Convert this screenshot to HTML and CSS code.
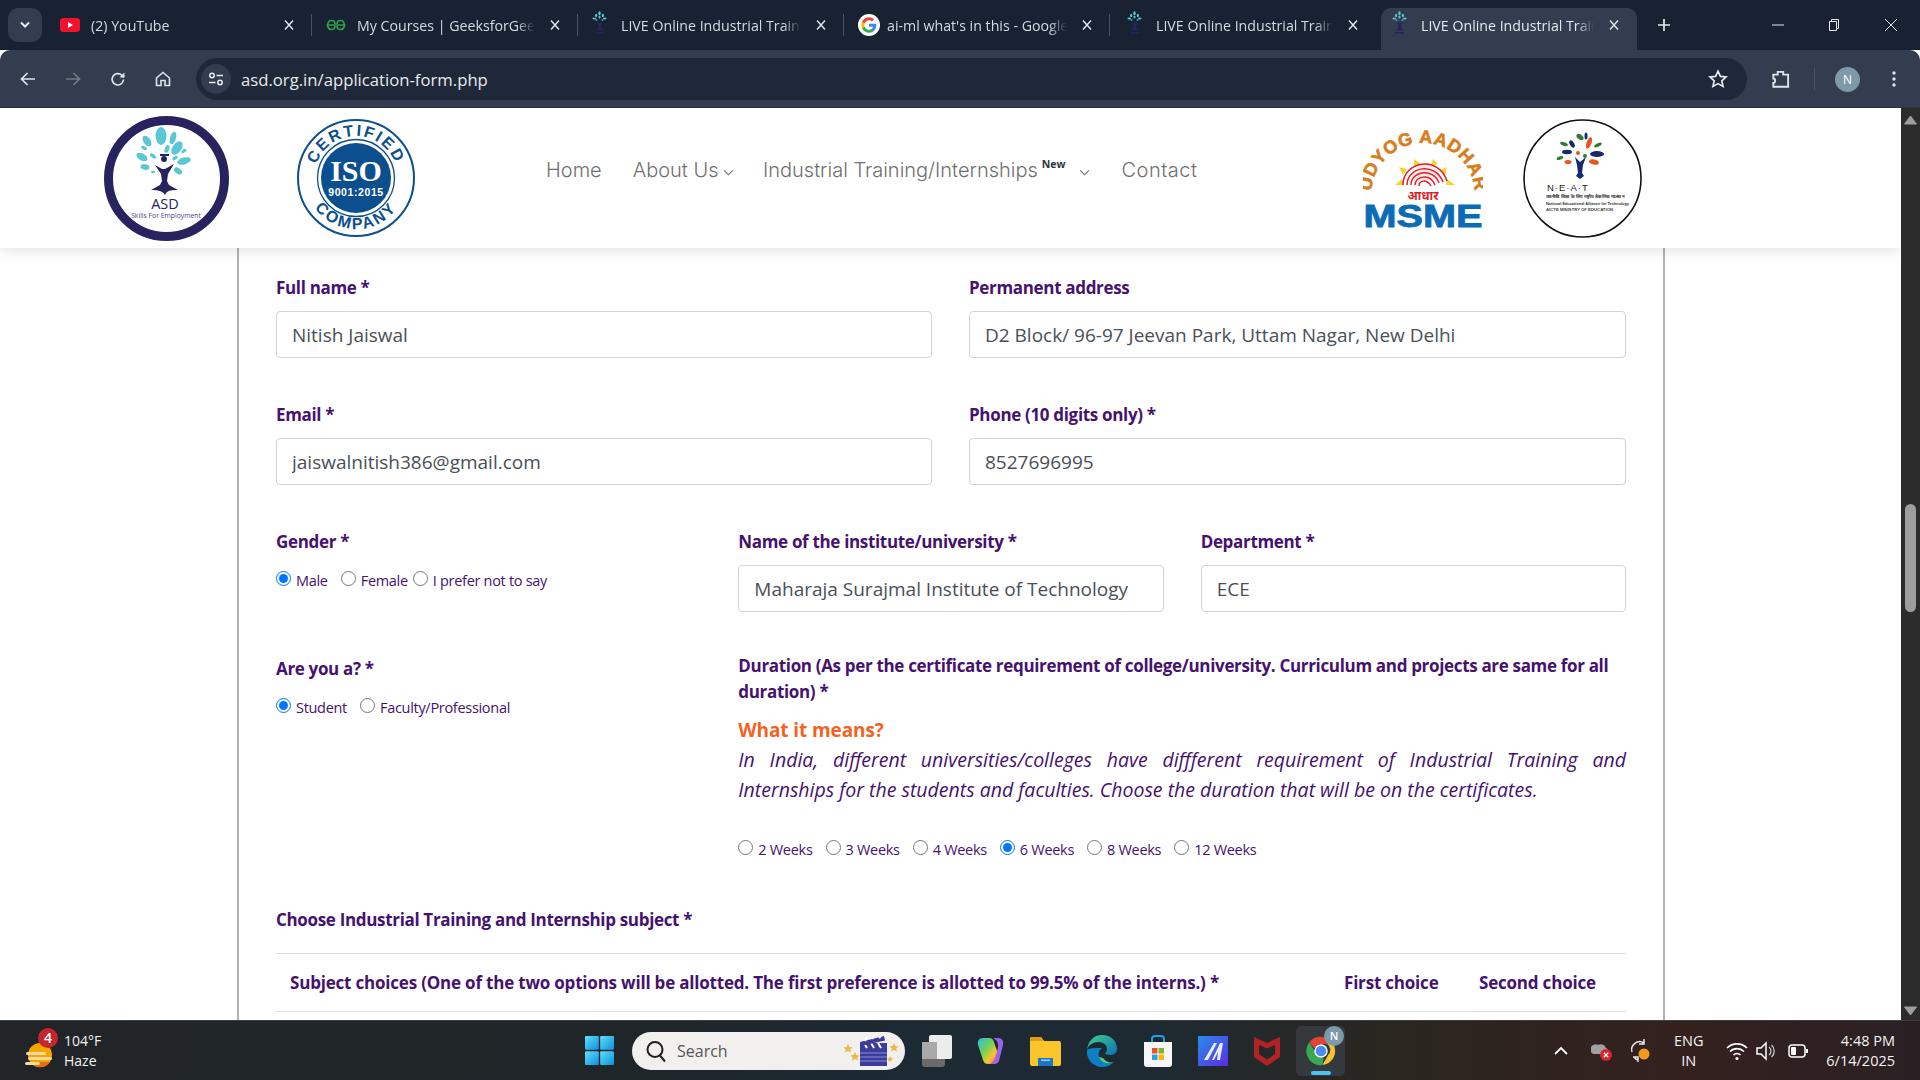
FILE: index.html
```html
<!DOCTYPE html>
<html lang="en">
<head>
<meta charset="utf-8">
<title>LIVE Online Industrial Training</title>
<link rel="stylesheet" href="styles.css">
</head>
<body>
<svg class="sprite" aria-hidden="true">
  <symbol id="fav" viewBox="0 0 20 32">
    <g fill="#58c8d2"><ellipse cx="10" cy="3" rx="1.6" ry="2.6"/><ellipse cx="5.5" cy="6" rx="1.5" ry="2.4"/><ellipse cx="14.5" cy="6" rx="1.5" ry="2.4"/><ellipse cx="3" cy="10" rx="2.4" ry="1.3"/><ellipse cx="17" cy="10" rx="2.4" ry="1.3"/><ellipse cx="10" cy="8" rx="1.4" ry="2"/><ellipse cx="6" cy="12" rx="1.4" ry="1"/><ellipse cx="14" cy="12" rx="1.4" ry="1"/></g>
    <path fill="#28235f" d="M6 14l3 2 2 0 3-2-2 6 1 4 3 2H5l3-2 1-4z"/>
    <rect x="4" y="28" width="12" height="2" fill="#28235f"/>
  </symbol>
  <symbol id="x" viewBox="0 0 12 12"><path d="M2 1.5l8 9M10 1.5l-8 9" stroke="#dfe3ea" stroke-width="1.5" fill="none"/></symbol>
</svg>

<div class="window">
  <header class="tabstrip">
    <button class="tabs-menu" type="button"><svg width="12" height="8" viewBox="0 0 12 8"><path d="M2 1.5l4 4 4-4" stroke="#e8eaed" stroke-width="2" fill="none"/></svg></button>
    <div class="tab">
      <svg class="tab-icon" viewBox="0 0 20 14"><rect width="20" height="14" rx="3.5" fill="#f4112d"/><path d="M8 4l5 3-5 3z" fill="#fff"/></svg>
      <span class="tab-title">(2) YouTube</span>
      <svg class="tab-x"><use href="#x"/></svg>
    </div>
    <div class="tab">
      <svg class="tab-icon" viewBox="0 0 20 12"><g fill="none" stroke="#2f9e49" stroke-width="1.7"><path d="M10 6H1.5C2 3 3.5 1.5 5.5 1.5S9 3 9 5"/><path d="M10 6h8.500C18 3 16.500 1.500 14.500 1.500S11 3 11 5"/><path d="M1.500 6C2 9 3.500 10.500 5.500 10.500S9 9 9 7M18.500 6C18 9 16.500 10.500 14.500 10.500S11 9 11 7"/></g></svg>
      <span class="tab-title">My Courses | GeeksforGeeks</span>
      <svg class="tab-x"><use href="#x"/></svg>
    </div>
    <div class="tab">
      <svg class="tab-fav"><use href="#fav"/></svg>
      <span class="tab-title">LIVE Online Industrial Training</span>
      <svg class="tab-x"><use href="#x"/></svg>
    </div>
    <div class="tab">
      <svg class="tab-icon tab-google" viewBox="0 0 24 24"><circle cx="12" cy="12" r="12" fill="#fff"/><path fill="#4285f4" d="M20 12.300c0-.6-.05-1.100-.15-1.600H12v3.100h4.500c-.2 1-.8 1.900-1.700 2.500v2h2.700c1.600-1.500 2.500-3.600 2.500-6z"/><path fill="#34a853" d="M12 20.500c2.300 0 4.200-.8 5.500-2.100l-2.700-2c-.7.5-1.700.8-2.800.8-2.200 0-4-1.500-4.700-3.400H4.500v2.100c1.400 2.800 4.300 4.600 7.500 4.600z"/><path fill="#fbbc05" d="M7.300 13.800c-.4-1-.4-2.300 0-3.500V8.200H4.500c-1 1.900-1 5.100 0 7.700z"/><path fill="#ea4335" d="M12 6.800c1.200 0 2.400.4 3.200 1.300l2.400-2.400C16.100 4.300 14.200 3.500 12 3.500c-3.200 0-6.100 1.800-7.500 4.700l2.800 2.100C8 8.300 9.800 6.800 12 6.800z"/></svg>
      <span class="tab-title">ai-ml what's in this - Google Search</span>
      <svg class="tab-x"><use href="#x"/></svg>
    </div>
    <div class="tab tab-last">
      <svg class="tab-fav"><use href="#fav"/></svg>
      <span class="tab-title">LIVE Online Industrial Training</span>
      <svg class="tab-x"><use href="#x"/></svg>
    </div>
    <div class="tab tab-active">
      <svg class="tab-fav"><use href="#fav"/></svg>
      <span class="tab-title">LIVE Online Industrial Training</span>
      <svg class="tab-x"><use href="#x"/></svg>
    </div>
    <svg class="new-tab" viewBox="0 0 14 14"><path d="M7 1v12M1 7h12" stroke="#e8eaed" stroke-width="1.700"/></svg>
    <div class="win-controls">
      <svg width="12" height="12" viewBox="0 0 12 12"><path d="M0 6h12" stroke="#e8eaed"/></svg>
      <svg width="12" height="14" viewBox="0 0 12 14"><path d="M1.500 3.500h7v9h-7zM3.500 3.500v-2h7v9h-2" stroke="#e8eaed" fill="none"/></svg>
      <svg width="14" height="14" viewBox="0 0 14 14"><path d="M1 1l12 12M13 1L1 13" stroke="#e8eaed" fill="none"/></svg>
    </div>
  </header>

  <div class="toolbar">
    <svg class="tb-icon" viewBox="0 0 18 18"><path d="M16 9H3M8.500 3L2.500 9l6 6" stroke="#dfe3ea" stroke-width="1.700" fill="none"/></svg>
    <svg class="tb-icon" viewBox="0 0 18 18"><path d="M2 9h13M9.500 3l6 6-6 6" stroke="#737a87" stroke-width="1.700" fill="none"/></svg>
    <svg class="tb-icon" viewBox="0 0 18 18"><path d="M14.500 9.500a5.700 5.700 0 1 1-1.700-4.300L15 7.300" stroke="#dfe3ea" stroke-width="1.700" fill="none"/><path d="M15.500 2.500v5h-5z" fill="#dfe3ea"/></svg>
    <svg class="tb-icon" viewBox="0 0 18 18"><path d="M2.500 8L9 2.500 15.500 8v7.500h-4.500v-5H7v5H2.500z" stroke="#dfe3ea" stroke-width="1.600" fill="none"/></svg>
    <div class="omnibox">
      <span class="site-info"><svg width="18" height="18" viewBox="0 0 18 18"><g stroke="#e8eaed" stroke-width="1.500" fill="none"><circle cx="5" cy="5.500" r="2.200"/><path d="M9.500 5.500H16M2 12.500h6.500"/><circle cx="13" cy="12.500" r="2.200"/></g></svg></span>
      <span class="url">asd.org.in/application-form.php</span>
      <svg class="star" viewBox="0 0 20 20"><path d="M10 2.200l2.400 5.200 5.600.6-4.200 3.800 1.200 5.600L10 14.600l-5 2.800 1.200-5.600L2 8l5.600-.6z" stroke="#e8eaed" stroke-width="1.700" fill="none"/></svg>
    </div>
    <svg class="ext" viewBox="0 0 20 20"><path d="M3 6h4V3.500h5V6h4.500v11H3v-3.500c2.200 0 2.200-4 0-4z" stroke="#dfe3ea" stroke-width="1.700" fill="none"/></svg>
    <span class="tb-sep"></span>
    <span class="avatar">N</span>
    <svg class="kebab" viewBox="0 0 4 18"><circle cx="2" cy="3" r="1.700" fill="#dfe3ea"/><circle cx="2" cy="9" r="1.700" fill="#dfe3ea"/><circle cx="2" cy="15" r="1.700" fill="#dfe3ea"/></svg>
  </div>

  <div class="viewport">
    <div class="page">
      <div class="site-header">
        <svg class="logo-asd" viewBox="0 0 125 125">
          <circle cx="62.500" cy="62.500" r="58" fill="#fff" stroke="#28235f" stroke-width="9"/>
          <g fill="#5ac8d2">
            <ellipse cx="57" cy="20" rx="5.500" ry="9"/><ellipse cx="43" cy="25" rx="3.500" ry="6" transform="rotate(-35 43 25)"/><ellipse cx="69" cy="22" rx="3" ry="6.500" transform="rotate(15 69 22)"/>
            <ellipse cx="73" cy="32" rx="4.500" ry="7.500" transform="rotate(35 73 32)"/><ellipse cx="38" cy="41" rx="6" ry="3.500" transform="rotate(30 38 41)"/><ellipse cx="80" cy="45" rx="7" ry="3.500" transform="rotate(-15 80 45)"/>
            <ellipse cx="40" cy="32" rx="3.200" ry="1.800" transform="rotate(30 40 32)"/><ellipse cx="80" cy="35" rx="3" ry="1.600" transform="rotate(-35 80 35)"/><ellipse cx="63" cy="33" rx="2.300" ry="4" transform="rotate(20 63 33)"/>
            <ellipse cx="49" cy="40" rx="3.500" ry="1.800" transform="rotate(35 49 40)"/><ellipse cx="71" cy="42" rx="3" ry="1.800" transform="rotate(-30 71 42)"/><ellipse cx="41" cy="51" rx="4.500" ry="2.800" transform="rotate(10 41 51)"/><ellipse cx="74" cy="55" rx="4.500" ry="2.800" transform="rotate(35 74 55)"/><ellipse cx="49" cy="56" rx="2" ry="1.300"/>
          </g>
          <circle cx="60" cy="43" r="3" fill="#28235f"/><rect x="56" y="38" width="9" height="2" fill="#28235f"/>
          <path fill="#28235f" d="M51 49l7 4 3 0 9-5-6 10-1 7 2 4 9 5c-9 0-11 1-13 5-2-4-7-5-14-5l9-5 2-4-1-7z"/>
          <text class="asd-name" x="61" y="93" text-anchor="middle">ASD</text>
          <text class="asd-sub" x="62" y="102" text-anchor="middle">Skills For Employment</text>
        </svg>
        <svg class="logo-iso" viewBox="0 0 118 118">
          <circle cx="59" cy="59" r="58" fill="#fff" stroke="#0c4f8e" stroke-width="2"/>
          <circle cx="59" cy="59" r="38.500" fill="none" stroke="#0c4f8e" stroke-width="1.300"/>
          <circle cx="59" cy="59" r="35" fill="#0c4f8e"/>
          <defs>
            <path id="iso-top" d="M 17 59 A 42 42 0 0 1 101 59"/>
            <path id="iso-bot" d="M 8 59 A 51 51 0 0 0 110 59"/>
          </defs>
          <text class="iso-arc"><textPath href="#iso-top" startOffset="50%" text-anchor="middle">CERTIFIED</textPath></text>
          <text class="iso-arc"><textPath href="#iso-bot" startOffset="50%" text-anchor="middle">COMPANY</textPath></text>
          <text class="iso-big" x="59" y="62" text-anchor="middle">ISO</text>
          <text class="iso-num" x="59" y="77" text-anchor="middle">9001:2015</text>
        </svg>
        <nav class="nav">
          <a class="nav-home">Home</a>
          <a class="nav-about">About Us <svg class="caret" viewBox="0 0 10 6"><path d="M1 1l4 4 4-4" stroke="#777" fill="none"/></svg></a>
          <a class="nav-train">Industrial Training/Internships<sup class="new">New</sup> <svg class="caret" viewBox="0 0 10 6"><path d="M1 1l4 4 4-4" stroke="#777" fill="none"/></svg></a>
          <a class="nav-contact">Contact</a>
        </nav>
        <svg class="logo-msme" viewBox="0 0 120 99">
          <defs><path id="msme-arc" d="M 8 66 A 52 52 0 0 1 112 66"/></defs>
          <text class="msme-arc"><textPath href="#msme-arc" startOffset="50%" text-anchor="middle">UDYOG AADHAR</textPath></text>
          <g fill="#f6d52a"><path d="M32 56l7-6 2 6zM36 38l8 2-4 6zM51 30l7 5-7 3zM70 30l-2 7 7-2zM84 38l-7 3 5 5zM92 56l-8-6-1 6z"/></g>
          <path d="M48 52a14 14 0 0 1 30-2" fill="#fde9e9"/>
          <g fill="none" stroke="#e01f26" stroke-width="1.500"><path d="M40 56c0-24 36-30 44-4"/><path d="M44 56c0-18 28-24 36-3"/><path d="M48 56c0-14 22-18 28-2"/><path d="M52 56c0-9 15-12 20 0"/><path d="M56 57c0-6 8-7 12 0"/></g>
          <text class="msme-hi" x="60" y="71" text-anchor="middle">आधार</text>
          <text class="msme-name" x="60" y="98" text-anchor="middle" textLength="119" lengthAdjust="spacingAndGlyphs">MSME</text>
        </svg>
        <svg class="logo-neat" viewBox="0 0 119 119">
          <circle cx="59.500" cy="59.500" r="58.500" fill="#fff" stroke="#111" stroke-width="1.600"/>
          <path d="M52 38l5 5 6-5-3 8-1 8 2 3-4 3-4-3 2-3-1-8z" fill="#152a6e"/>
          <g>
            <ellipse cx="63" cy="17" rx="1.500" ry="3.500" fill="#152a6e"/><ellipse cx="57" cy="18" rx="4" ry="2.400" transform="rotate(35 57 18)" fill="#2e7d32"/><ellipse cx="66" cy="24" rx="2.500" ry="6" transform="rotate(20 66 24)" fill="#e9551f"/><ellipse cx="75" cy="26" rx="4" ry="1.700" transform="rotate(-25 75 26)" fill="#2e7d32"/><ellipse cx="49" cy="25" rx="2.200" ry="4" transform="rotate(-30 49 25)" fill="#152a6e"/><ellipse cx="41" cy="25" rx="4" ry="1.800" transform="rotate(20 41 25)" fill="#2e7d32"/><ellipse cx="44" cy="33" rx="5" ry="2.200" fill="#152a6e"/><ellipse cx="74" cy="35" rx="7" ry="3" fill="#152a6e"/><ellipse cx="37" cy="39" rx="3.500" ry="1.700" transform="rotate(-20 37 39)" fill="#2e7d32"/><ellipse cx="45" cy="43" rx="3.500" ry="2" fill="#e9551f"/><ellipse cx="71" cy="43" rx="5" ry="2.500" transform="rotate(15 71 43)" fill="#e9551f"/><circle cx="55" cy="34" r="2" fill="#e9551f"/><circle cx="62" cy="37" r="2" fill="#2e7d32"/>
          </g>
          <text class="neat-name" x="24" y="72">N·E·A·T</text>
          <text class="neat-hi" x="23" y="79" textLength="78" lengthAdjust="spacingAndGlyphs">तकनीकी शिक्षा के लिए राष्ट्रीय शैक्षणिक गठबंधन</text>
          <text class="neat-en" x="23" y="86" textLength="83" lengthAdjust="spacingAndGlyphs">National Educational Alliance for Technology</text>
          <text class="neat-sm" x="23" y="92" textLength="67" lengthAdjust="spacingAndGlyphs">AICTE MINISTRY OF EDUCATION</text>
        </svg>
      </div>

      <form class="form-panel">
        <div class="row-two">
          <div>
            <label class="field-label">Full name *</label>
            <input class="text-input" type="text" value="Nitish Jaiswal">
          </div>
          <div>
            <label class="field-label">Permanent address</label>
            <input class="text-input" type="text" value="D2 Block/ 96-97 Jeevan Park, Uttam Nagar, New Delhi">
          </div>
        </div>
        <div class="row-two">
          <div>
            <label class="field-label">Email *</label>
            <input class="text-input" type="text" value="jaiswalnitish386@gmail.com">
          </div>
          <div>
            <label class="field-label">Phone (10 digits only) *</label>
            <input class="text-input" type="text" value="8527696995">
          </div>
        </div>
        <div class="row-three">
          <div>
            <label class="field-label">Gender *</label>
            <div class="radios">
              <label class="radio"><input type="radio" name="gender" checked>Male</label>
              <label class="radio radio-female"><input type="radio" name="gender">Female</label>
              <label class="radio"><input type="radio" name="gender">I prefer not to say</label>
            </div>
          </div>
          <div>
            <label class="field-label">Name of the institute/university *</label>
            <input class="text-input" type="text" value="Maharaja Surajmal Institute of Technology">
          </div>
          <div>
            <label class="field-label">Department *</label>
            <input class="text-input" type="text" value="ECE">
          </div>
        </div>
        <div class="row-role">
          <div>
            <label class="field-label">Are you a? *</label>
            <div class="radios">
              <label class="radio"><input type="radio" name="role" checked>Student</label>
              <label class="radio"><input type="radio" name="role">Faculty/Professional</label>
            </div>
          </div>
          <div class="duration-col">
            <label class="field-label duration-label">Duration (As per the certificate requirement of college/university. Curriculum and projects are same for all duration) *</label>
            <h4 class="means-title">What it means?</h4>
            <p class="means-text">In India, different universities/colleges have diffferent requirement of Industrial Training and Internships for the students and faculties. Choose the duration that will be on the certificates.</p>
            <div class="radios duration-radios">
              <label class="radio"><input type="radio" name="dur">2 Weeks</label>
              <label class="radio"><input type="radio" name="dur">3 Weeks</label>
              <label class="radio"><input type="radio" name="dur">4 Weeks</label>
              <label class="radio"><input type="radio" name="dur" checked>6 Weeks</label>
              <label class="radio"><input type="radio" name="dur">8 Weeks</label>
              <label class="radio"><input type="radio" name="dur">12 Weeks</label>
            </div>
          </div>
        </div>
        <label class="field-label choose-label">Choose Industrial Training and Internship subject *</label>
        <div class="subject-head">
          <span class="subject-main">Subject choices (One of the two options will be allotted. The first preference is allotted to 99.5% of the interns.) *</span>
          <span class="subject-first">First choice</span>
          <span class="subject-second">Second choice</span>
        </div>
      </form>
    </div>
    <aside class="scrollbar">
      <svg class="sb-arrow" viewBox="0 0 13 10"><path d="M6.500 1L12.500 9H.5z" fill="#9e9e9e" stroke="#9e9e9e" stroke-linejoin="round"/></svg>
      <div class="sb-track"><div class="sb-thumb"></div></div>
      <svg class="sb-arrow" viewBox="0 0 13 10"><path d="M.5 1h12L6.500 9z" fill="#9e9e9e" stroke="#9e9e9e" stroke-linejoin="round"/></svg>
    </aside>
  </div>

  <footer class="taskbar">
    <div class="tb-weather">
      <span class="weather-icon">
        <svg width="30" height="28" viewBox="0 0 30 28"><circle cx="15" cy="14" r="12" fill="#f7a600"/><path d="M5 21a12 12 0 0 0 20 0z" fill="#e86c12"/><g fill="#f4d9a0"><rect x="1" y="11" width="20" height="3" rx="1.500"/><rect x="3" y="16" width="24" height="3" rx="1.500"/><rect x="0" y="21" width="15" height="3" rx="1.500"/></g></svg>
        <span class="badge">4</span>
      </span>
      <span class="weather-text"><span>104°F</span><span>Haze</span></span>
    </div>
    <div class="tb-center">
      <svg class="win-logo" viewBox="0 0 30 30"><defs><linearGradient id="wl" x1="0" y1="0" x2="1" y2="1"><stop offset="0" stop-color="#5ee0fb"/><stop offset="1" stop-color="#0f8fdc"/></linearGradient></defs><rect width="14.300" height="14.300" rx="1" fill="url(#wl)"/><rect x="15.700" width="14.300" height="14.300" rx="1" fill="url(#wl)"/><rect y="15.700" width="14.300" height="14.300" rx="1" fill="url(#wl)"/><rect x="15.700" y="15.700" width="14.300" height="14.300" rx="1" fill="url(#wl)"/></svg>
      <div class="search-pill">
        <svg width="22" height="24" viewBox="0 0 22 24"><circle cx="10" cy="10.500" r="7.500" stroke="#202020" stroke-width="2" fill="none"/><path d="M15 16.500l5 6" stroke="#202020" stroke-width="2"/></svg>
        <span class="search-text">Search</span>
        <svg class="clapper" width="58" height="30" viewBox="0 0 58 30"><g fill="#e9b949"><path d="M5 8l1.500 3 3 .4-2.200 2 .6 3L5 15l-2.900 1.400.6-3-2.200-2 3-.4z"/><path d="M12 16l1.500 3 3 .4-2.200 2 .6 3-2.900-1.400-2.900 1.400.6-3-2.200-2 3-.4z"/><path d="M51 7l1.500 3 3 .4-2.200 2 .6 3L51 14l-2.900 1.400.6-3-2.200-2 3-.4z"/><path d="M47 20l1 2 2 .3-1.500 1.400.4 2-1.900-1-1.900 1 .4-2-1.500-1.400 2-.3z"/></g><rect x="17" y="12" width="27" height="18" fill="#3c3c9e"/><path d="M17 17h27M17 21h27M17 25h27" stroke="#8c8cd0"/><rect x="17" y="7" width="27" height="5" fill="#3c3c9e"/><path d="M21 7l3 5M28 7l3 5M35 7l3 5" stroke="#fff" stroke-width="2"/><path d="M17 6L41 0l1 4.500L18 10z" fill="#3c3c9e"/><path d="M22 5l2-4M29 3l2-3M36 2l2-2" stroke="#fff" stroke-width="2"/></svg>
      </div>
      <div class="app-icons">
        <svg width="36" height="34" viewBox="0 0 36 34"><rect x="3" y="8" width="23" height="25" rx="3" fill="#6a6a6a"/><rect x="10" y="1" width="23" height="24" rx="2" fill="#ececec"/><rect x="3" y="8" width="15" height="17" fill="#a9a9a9"/></svg>
        <svg width="30" height="30" viewBox="0 0 30 30"><defs><linearGradient id="cp" x1="0" y1="0" x2="1" y2="1"><stop offset="0" stop-color="#2fb4ee"/><stop offset=".4" stop-color="#6fd35a"/><stop offset=".68" stop-color="#f9c52c"/><stop offset="1" stop-color="#ee4f7a"/></linearGradient></defs><path d="M8 2h6c3 0 4 1.500 5 4l5 15c1 4-1 7-5 7h-6c-3 0-4-1.500-5-4L3 9C2 5 4 2 8 2z" fill="url(#cp)"/><path d="M18 2h5c4 0 6 3 5 7l-3 12c-1 4-3 7-7 7h-3c3-1 5-5 6-9l2-8c.6-4-1-7-5-9z" fill="#9a62ea"/></svg>
        <svg width="31" height="30" viewBox="0 0 31 30"><path d="M0 3a2 2 0 0 1 2-2h9l3 4h15a2 2 0 0 1 2 2v21a2 2 0 0 1-2 2H2a2 2 0 0 1-2-2z" fill="#f9c42c"/><path d="M0 3a2 2 0 0 1 2-2h9l3 4H0z" fill="#e09c15"/><path d="M8 22h15v8H8z" fill="#1a76c4"/><rect x="11" y="23.500" width="9" height="1.500" fill="#9cd1f5"/></svg>
        <svg width="32" height="32" viewBox="0 0 32 32"><defs><linearGradient id="ed" x1="0" y1="0" x2="1" y2="1"><stop offset="0" stop-color="#41d08c"/><stop offset="1" stop-color="#0c70b8"/></linearGradient></defs><path d="M1 15C2 6 8 0 16 0c9 0 15 6 15 14 0 4-3 6-7 6-3 0-5-1-5-2 1-1 2-2 2-4 0-4-4-7-8-7C7 7 2 10 1 15z" fill="url(#ed)"/><path d="M1 15c-1 9 6 17 15 17 5 0 9-2 12-5-6 3-13 1-15-5-1-4 0-7 3-9-7 0-13 0-15 2z" fill="#0e7fc4"/><path d="M13 22c2 6 9 8 15 5-4 1-8 0-10-3-1-1-3-2-5-2z" fill="#48d28a"/></svg>
        <svg width="30" height="32" viewBox="0 0 30 32"><path d="M9 8V4a3 3 0 0 1 3-3h6a3 3 0 0 1 3 3v4" fill="none" stroke="#19a3de" stroke-width="2"/><path d="M1 7h28v22a3 3 0 0 1-3 3H4a3 3 0 0 1-3-3z" fill="#f6f6f6"/><rect x="9" y="13" width="5.500" height="5.500" fill="#e8502e"/><rect x="15.500" y="13" width="5.500" height="5.500" fill="#7cb92a"/><rect x="9" y="19.500" width="5.500" height="5.500" fill="#2aa3e6"/><rect x="15.500" y="19.500" width="5.500" height="5.500" fill="#f8b615"/></svg>
        <svg width="30" height="30" viewBox="0 0 30 30"><defs><linearGradient id="ml" x1="0" y1="0" x2="1" y2="1"><stop offset="0" stop-color="#2a8ce8"/><stop offset="1" stop-color="#5b2be8"/></linearGradient></defs><rect width="30" height="30" fill="url(#ml)"/><path d="M6 24L16 7h3L10 24zM14 24l8-17h3l-3 17h-3l1-8-4 8z" fill="#e6ecff"/></svg>
        <svg width="28" height="30" viewBox="0 0 28 30"><path d="M1 1l13 6 13-6v20L14 30 1 21zM6 9v9l8 5.500 8-5.500V9l-8 3.600z" fill="#b32227"/></svg>
      </div>
      <div class="chrome-slot">
        <svg width="34" height="34" viewBox="0 0 48 48"><path d="M24 4a20 20 0 0 1 17.300 10H24a10 10 0 0 0-9.300 6.400L7.600 11.700A20 20 0 0 1 24 4z" fill="#e54335"/><path d="M41.300 14A20 20 0 0 1 26 43.900l8.500-14.800A10 10 0 0 0 32.700 14z" fill="#fbc02d"/><path d="M26 43.900A20 20 0 0 1 7.600 11.700l8.600 14.900a10 10 0 0 0 11.500 7z" fill="#3aa757"/><circle cx="24" cy="24" r="9.500" fill="#fff"/><circle cx="24" cy="24" r="7.500" fill="#4c8bf5"/></svg>
        <span class="chrome-badge">N</span>
        <span class="chrome-active"></span>
      </div>
    </div>
    <div class="tray">
      <svg class="tray-up" width="14" height="9" viewBox="0 0 14 9"><path d="M1 8l6-6 6 6" stroke="#fff" stroke-width="1.800" fill="none"/></svg>
      <span class="tray-cloud"><svg width="22" height="22" viewBox="0 0 22 22"><path d="M2 14a5 5 0 0 1 5-9c3-2 7 0 8 3a4 4 0 0 1 2 6z" fill="#a0a0a0"/><circle cx="15" cy="15" r="6" fill="#d8232a"/><path d="M12.800 12.800l4.400 4.400M17.200 12.800l-4.400 4.400" stroke="#fff" stroke-width="1.300"/></svg></span>
      <span class="tray-sync"><svg width="22" height="24" viewBox="0 0 22 24"><path d="M3 13A8 8 0 0 1 15 4M15 0v5h-5" fill="none" stroke="#e6e6e6" stroke-width="1.500"/><path d="M4 18h5v5M5 18a8 8 0 0 0 4 3" fill="none" stroke="#e6e6e6" stroke-width="1.500"/><circle cx="15" cy="15" r="5.500" fill="#f39a1d"/></svg></span>
      <span class="lang"><span>ENG</span><span>IN</span></span>
      <svg class="tray-wifi" width="22" height="20" viewBox="0 0 22 20"><g fill="none" stroke="#fff" stroke-width="1.700"><path d="M1 7a14 14 0 0 1 20 0"/><path d="M4 10.500a10 10 0 0 1 14 0"/><path d="M7.500 14a5 5 0 0 1 7 0"/></g><circle cx="11" cy="17.500" r="1.600" fill="#fff"/></svg>
      <svg class="tray-vol" width="20" height="20" viewBox="0 0 20 20"><path d="M1 7h4l5-5v16l-5-5H1z" fill="none" stroke="#fff" stroke-width="1.500"/><path d="M13 6a5 5 0 0 1 0 8M15.500 4a8 8 0 0 1 0 12" fill="none" stroke="#c9c9c9" stroke-width="1.300"/></svg>
      <svg class="tray-bat" width="20" height="14" viewBox="0 0 20 14"><rect x="1" y="1" width="16" height="12" rx="3" fill="none" stroke="#fff" stroke-width="1.500"/><rect x="3" y="3" width="5" height="8" rx="1" fill="#fff"/><rect x="18" y="5" width="2" height="4" fill="#fff"/></svg>
      <span class="clock"><span>4:48 PM</span><span>6/14/2025</span></span>
    </div>
  </footer>
</div>
</body>
</html>
```
FILE: styles.css
```css
* { box-sizing: border-box; }
html, body { margin: 0; height: 100%; overflow: hidden; }
body { font-family: "Open Sans", "Noto Sans", sans-serif; background: #fff; }
.sprite { width: 0; height: 0; display: block; overflow: hidden; }
.window { display: flex; flex-direction: column; height: 1080px; width: 1920px; }

/* Browser tab strip */
.tabstrip { height: 50px; flex: none; background: #182233; display: flex; align-items: flex-end; position: relative; }
.tabs-menu { width: 34px; height: 34px; margin: 0 4px 8px 8px; border: 0; border-radius: 10px; background: #333d4f; display: flex; align-items: center; justify-content: center; padding: 0; }
.tab { width: 266px; height: 42px; flex: none; display: flex; align-items: center; padding: 0 12px 8px 14px; position: relative; color: #d5d9e0; font-size: 14.200px; }
.tab::after { content: ""; position: absolute; right: 0; top: 6px; height: 22px; width: 1.500px; background: #4a5365; }
.tab-last::after, .tab-active::after { display: none; }
.tab-last { padding-left: 17px; }
.tab-active { background: #333d4f; border-radius: 10px 10px 0 0; color: #e4e7ec; width: 256px; margin-left: 5px; padding-left: 11px; }
.tab-icon { width: 20px; height: 14px; flex: none; margin-right: 11px; }
.tab-google { width: 22px; height: 22px; margin-right: 7px; }
.tab-fav { width: 15px; height: 24px; flex: none; margin-right: 14px; margin-top: -4px; }
.tab-title { flex: 1; white-space: nowrap; overflow: hidden; -webkit-mask-image: linear-gradient(90deg, #000 90%, transparent); mask-image: linear-gradient(90deg, #000 90%, transparent); }
.tab-x { width: 12px; height: 12px; flex: none; margin-left: 14px; margin-right: 5px; }
.new-tab { width: 14px; height: 14px; margin: 0 0 18px 20px; flex: none; }
.win-controls { margin-left: auto; display: flex; align-items: center; gap: 44px; height: 50px; padding: 0 22px 0 0; }

/* Toolbar */
.toolbar { height: 58px; flex: none; background: #333d4f; display: flex; align-items: center; padding-top: 1px; border-bottom: 1px solid #2a3342; border-radius: 10px 10px 0 0; }
.tb-icon { width: 18px; height: 18px; flex: none; margin-left: 19px; margin-right: 8px; }
.omnibox { margin-left: 16px; width: 1551px; height: 42px; flex: none; border-radius: 21px; background: #1e2838; display: flex; align-items: center; padding: 0 14px 0 5px; color: #e8eaed; }
.site-info { width: 30px; height: 30px; border-radius: 50%; background: #333d4f; display: flex; align-items: center; justify-content: center; }
.url { font-size: 16.700px; margin-left: 10px; flex: 1; }
.star { width: 20px; height: 20px; margin-right: 5px; }
.ext { width: 22px; height: 22px; margin-left: 23px; flex: none; }
.tb-sep { width: 1px; height: 22px; background: #4a5365; margin-left: 22px; flex: none; }
.avatar { width: 25px; height: 25px; border-radius: 50%; background: #7e99a8; color: #fff; font-size: 12px; display: flex; align-items: center; justify-content: center; margin-left: 20px; flex: none; }
.kebab { width: 4px; height: 18px; margin-left: 32px; flex: none; }

/* Page */
.viewport { flex: 1; display: flex; min-height: 0; }
.page { flex: 1; min-width: 0; overflow: hidden; background: #fff; }
.site-header { height: 140px; background: #fff; display: flex; align-items: center; position: relative; z-index: 2; box-shadow: 0 2px 14px rgba(0,0,0,.13); padding-left: 104px; }
.logo-asd { width: 125px; height: 125px; flex: none; }
.logo-iso { width: 118px; height: 118px; flex: none; margin-left: 68px; }
.logo-msme { width: 120px; height: 99px; flex: none; margin-left: 167px; }
.logo-neat { width: 119px; height: 119px; flex: none; margin-left: 40px; }
.asd-name { font: 400 14.500px "Open Sans", sans-serif; fill: #28235f; }
.asd-sub { font: 400 6.800px "Open Sans", sans-serif; fill: #4a3f94; }
.iso-arc { font: 700 16px "Liberation Sans", sans-serif; fill: #0c4f8e; letter-spacing: 2.200px; }
.iso-big { font: 700 30px "Liberation Serif", serif; fill: #fff; }
.iso-num { font: 700 10.500px "Liberation Sans", sans-serif; fill: #fff; letter-spacing: .6px; }
.msme-arc { font: 700 18px "Liberation Sans", sans-serif; fill: #d87d1c; stroke: #d87d1c; stroke-width: .6px; letter-spacing: .6px; }
.msme-hi { font: 700 12px "Noto Sans", sans-serif; fill: #d81f26; }
.msme-name { font: 900 31px "Liberation Sans", sans-serif; fill: #0b6cb5; stroke: #0b6cb5; stroke-width: .8px; }
.neat-name { font: 400 9.500px "Liberation Sans", sans-serif; fill: #222; letter-spacing: 1px; }
.neat-hi { font: 700 4.300px "Liberation Sans", sans-serif; fill: #333; }
.neat-en { font: 700 4.300px "Liberation Sans", sans-serif; fill: #333; }
.neat-sm { font: 700 3.600px "Liberation Sans", sans-serif; fill: #444; }

.nav { display: flex; align-items: center; margin: 0 0 17px 131px; color: #6f6f6f; font: 300 20px "Inter", "Lato", sans-serif; width: 650px; }
.nav a { white-space: nowrap; display: flex; align-items: center; }
.nav-about { margin-left: 31px; }
.nav-train { margin-left: 28.500px; }
.nav-contact { margin-left: 32px; letter-spacing: .5px; }
.caret { width: 11px; height: 7px; margin-left: 5px; margin-top: 5px; }
.new { font: 700 10.500px "Open Sans", sans-serif; color: #2f3542; margin: -12px 8px 0 4px; }

/* Form */
.form-panel { margin-left: 237px; width: 1428px; height: 800px; border-left: 2px solid #b2b2b2; border-right: 2px solid #b2b2b2; padding: 26px 37px 0; color: #45126f; }
.row-two { display: grid; grid-template-columns: 656px 1fr; column-gap: 37px; height: 127px; }
.row-three { display: grid; grid-template-columns: repeat(3, 1fr); column-gap: 37px; height: 127px; }
.row-role { display: grid; grid-template-columns: repeat(3, 1fr); column-gap: 37px; }
.duration-col { grid-column: span 2; }
.field-label { display: block; font-size: 17px; letter-spacing: -.33px; font-weight: 700; line-height: 28px; margin-bottom: 9px; }
.text-input { display: block; width: 100%; height: 47px; padding: 0 15px; border: 1px solid #ced4da; border-radius: 4px; color: #495057; font: 400 19px "Open Sans", sans-serif; background: #fff; outline: none; }
.radios { display: flex; margin-top: 13px; height: 24px; }
.radio { display: flex; align-items: flex-start; font-size: 14.500px; letter-spacing: -.3px; line-height: 24px; margin-right: 13px; white-space: nowrap; }
.radio input { width: 15px; height: 15px; margin: 2px 5px 0 0; flex: none; }
.radio-female { margin-right: 5px; }
.duration-label { line-height: 26px; margin-bottom: 10px; margin-top: -2px; }
.means-title { margin: 0; font-size: 19px; letter-spacing: -.1px; line-height: 30px; font-weight: 700; color: #f4621f; }
.means-text { margin: 0; font-size: 19.500px; font-style: italic; line-height: 30px; text-align: justify; }
.duration-radios { margin-top: 33px; }
.choose-label { margin-top: 44px; margin-bottom: 19px; }
.subject-head { display: flex; align-items: center; height: 59px; border-top: 1.500px solid #dedede; border-bottom: 1.500px solid #dedede; font-size: 17px; letter-spacing: -.2px; font-weight: 700; padding: 0 0 0 14px; }
.subject-main { width: 1054px; white-space: nowrap; }
.subject-first { width: 135px; white-space: nowrap; }
.subject-second { white-space: nowrap; }

/* Scrollbar */
.scrollbar { width: 19px; flex: none; background: #2c2c2c; display: flex; flex-direction: column; align-items: center; padding: 7px 0 4px; }
.sb-arrow { width: 13px; height: 10px; flex: none; }
.sb-track { flex: 1; width: 100%; display: flex; justify-content: center; }
.sb-thumb { width: 11px; height: 108px; border-radius: 6px; background: #9e9e9e; margin-top: 379px; }

/* Taskbar */
.taskbar { height: 60px; flex: none; display: flex; align-items: center; color: #f2f2f2; background: linear-gradient(90deg, #212528 0%, #1f2528 30%, #1c2a34 48%, #1e2a32 60%, #2a2620 72%, #34211e 88%, #2a2024 100%); border-top: 1px solid #3a3e42; position: relative; }
.tb-weather { display: flex; width: 585px; padding-left: 25px; align-items: center; flex: none; }
.weather-icon { width: 39px; height: 36px; position: relative; display: flex; align-items: flex-end; }
.badge { position: absolute; left: 13px; top: -5px; width: 20px; height: 20px; border-radius: 50%; background: #c4262e; color: #fff; font-size: 14px; display: flex; align-items: center; justify-content: center; font-weight: 600; }
.weather-text { display: flex; flex-direction: column; font-size: 14px; line-height: 20px; }
.tb-center { display: flex; align-items: center; flex: none; }
.win-logo { width: 29px; height: 29px; flex: none; }
.search-pill { width: 273px; height: 38px; border-radius: 19px; background: #f1f0ee; margin-left: 18px; display: flex; align-items: center; padding-left: 13px; color: #565656; flex: none; }
.search-text { font-size: 16px; margin-left: 10px; flex: 1; }
.clapper { margin-right: 4px; }
.app-icons { display: flex; align-items: center; gap: 25px; margin-left: 14px; }
.app-icons svg:nth-child(2) { margin-left: -5px; }
.chrome-slot { width: 49px; height: 50px; background: #33393d; border-radius: 5px; margin-left: 15px; position: relative; display: flex; align-items: center; justify-content: center; }
.chrome-badge { position: absolute; right: 1px; top: 0; width: 20px; height: 20px; border-radius: 50%; background: #7e99a8; color: #fff; font-size: 11px; font-weight: 600; display: flex; align-items: center; justify-content: center; }
.chrome-active { position: absolute; left: 15px; bottom: 1px; width: 20px; height: 4px; border-radius: 2px; background: #4fc1f5; }
.tray { margin-left: 209px; display: flex; align-items: center; flex: none; width: 341px; }
.tray-cloud { margin-left: 23px; display: flex; }
.tray-sync { margin-left: 16px; display: flex; }
.lang, .clock { display: flex; flex-direction: column; font-size: 14.500px; line-height: 20px; align-items: center; }
.lang { margin-left: 23px; }
.tray-wifi { margin-left: 22px; }
.tray-vol { margin-left: 8px; }
.tray-bat { margin-left: 12px; }
.clock { margin-left: auto; align-items: flex-end; }
```
